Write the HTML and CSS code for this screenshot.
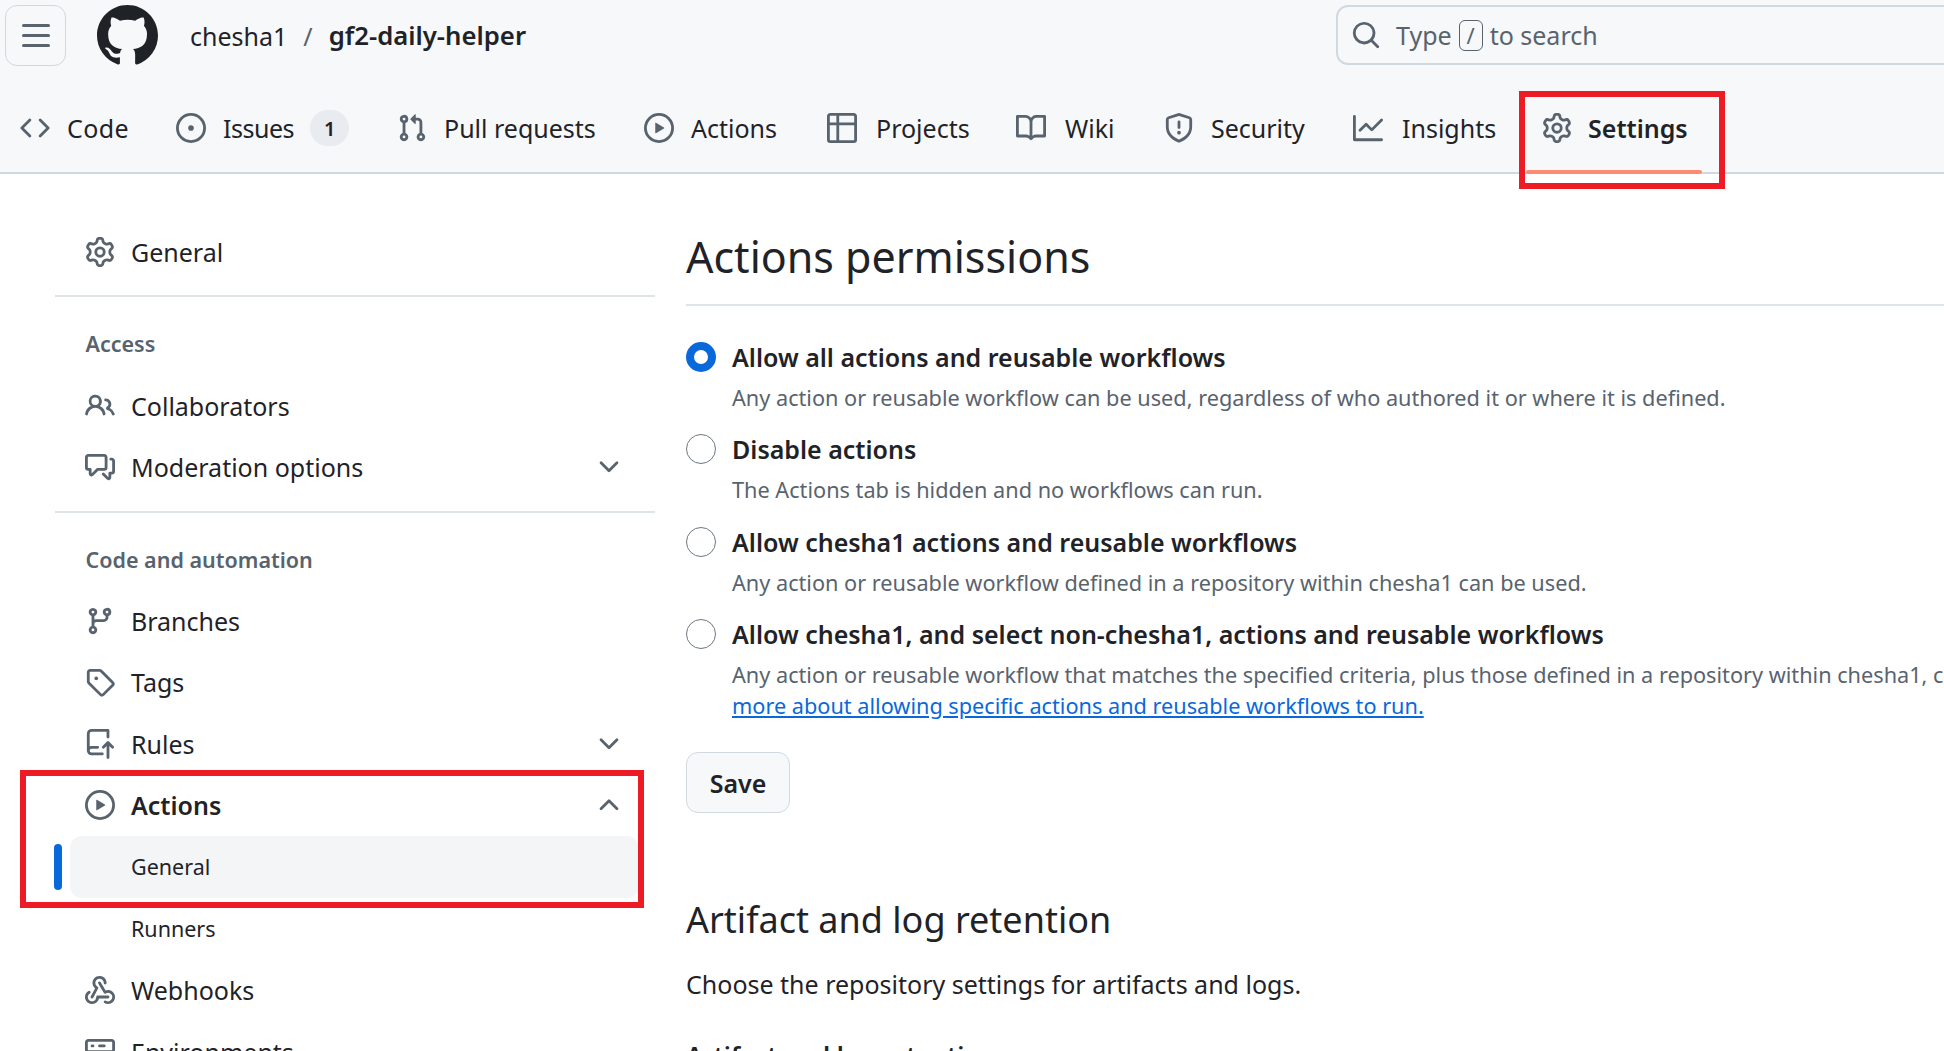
FILE: index.html
```html
<!DOCTYPE html>
<html lang="en">
<head>
<meta charset="utf-8">
<title>Actions permissions</title>
<link rel="stylesheet" href="styles.css">
</head>
<body>
<svg class="sprite" aria-hidden="true">
<symbol id="i-bars" viewBox="0 0 16 16"><path d="M1 2.75A.75.75 0 0 1 1.75 2h12.5a.75.75 0 0 1 0 1.5H1.75A.75.75 0 0 1 1 2.75Zm0 5A.75.75 0 0 1 1.75 7h12.5a.75.75 0 0 1 0 1.5H1.75A.75.75 0 0 1 1 7.75ZM1.75 12h12.5a.75.75 0 0 1 0 1.5H1.75a.75.75 0 0 1 0-1.5Z"/></symbol>
<symbol id="i-github" viewBox="0 0 16 16"><path d="M8 0c4.42 0 8 3.58 8 8a8.013 8.013 0 0 1-5.45 7.59c-.4.08-.55-.17-.55-.38 0-.27.01-1.13.01-2.2 0-.75-.25-1.23-.54-1.48 1.78-.2 3.65-.88 3.65-3.95 0-.88-.31-1.59-.82-2.15.08-.2.36-1.02-.08-2.12 0 0-.67-.22-2.2.82-.64-.18-1.32-.27-2-.27-.68 0-1.36.09-2 .27-1.53-1.03-2.2-.82-2.2-.82-.44 1.1-.16 1.92-.08 2.12-.51.56-.82 1.28-.82 2.15 0 3.06 1.86 3.75 3.64 3.95-.23.2-.44.55-.51 1.07-.46.21-1.61.55-2.33-.66-.15-.24-.6-.83-1.23-.82-.67.01-.27.38.01.53.34.19.73.9.82 1.13.16.45.68 1.31 2.69.94 0 .67.01 1.3.01 1.49 0 .21-.15.45-.55.38A7.995 7.995 0 0 1 0 8c0-4.42 3.58-8 8-8Z"/></symbol>
<symbol id="i-search" viewBox="0 0 16 16"><path d="M10.68 11.74a6 6 0 0 1-7.922-8.982 6 6 0 0 1 8.982 7.922l3.04 3.04a.749.749 0 0 1-.326 1.275.749.749 0 0 1-.734-.215ZM11.5 7a4.499 4.499 0 1 0-8.997 0A4.499 4.499 0 0 0 11.5 7Z"/></symbol>
<symbol id="i-code" viewBox="0 0 16 16"><path d="m11.28 3.22 4.25 4.25a.75.75 0 0 1 0 1.06l-4.25 4.25a.749.749 0 0 1-1.275-.326.749.749 0 0 1 .215-.734L13.94 8l-3.72-3.72a.749.749 0 0 1 .326-1.275.749.749 0 0 1 .734.215Zm-6.56 0a.751.751 0 0 1 1.042.018.751.751 0 0 1 .018 1.042L2.06 8l3.72 3.72a.749.749 0 0 1-.326 1.275.749.749 0 0 1-.734-.215L.47 8.53a.75.75 0 0 1 0-1.06Z"/></symbol>
<symbol id="i-issue" viewBox="0 0 16 16"><path d="M8 9.5a1.5 1.5 0 1 0 0-3 1.5 1.5 0 0 0 0 3Z"/><path d="M8 0a8 8 0 1 1 0 16A8 8 0 0 1 8 0ZM1.5 8a6.5 6.5 0 1 0 13 0 6.5 6.5 0 0 0-13 0Z"/></symbol>
<symbol id="i-pr" viewBox="0 0 16 16"><path d="M1.5 3.25a2.25 2.25 0 1 1 3 2.122v5.256a2.251 2.251 0 1 1-1.5 0V5.372A2.25 2.25 0 0 1 1.5 3.25Zm5.677-.177L9.573.677A.25.25 0 0 1 10 .854V2.5h1A2.5 2.5 0 0 1 13.5 5v5.628a2.251 2.251 0 1 1-1.5 0V5a1 1 0 0 0-1-1h-1v1.646a.25.25 0 0 1-.427.177L7.177 3.427a.25.25 0 0 1 0-.354ZM3.75 2.5a.75.75 0 1 0 0 1.5.75.75 0 0 0 0-1.5Zm0 9.5a.75.75 0 1 0 0 1.5.75.75 0 0 0 0-1.5Zm8.25.75a.75.75 0 1 0 1.5 0 .75.75 0 0 0-1.5 0Z"/></symbol>
<symbol id="i-play" viewBox="0 0 16 16"><path d="M8 0a8 8 0 1 1 0 16A8 8 0 0 1 8 0ZM1.5 8a6.5 6.5 0 1 0 13 0 6.5 6.5 0 0 0-13 0Zm4.879-2.773 4.264 2.559a.25.25 0 0 1 0 .428l-4.264 2.559A.25.25 0 0 1 6 10.559V5.442a.25.25 0 0 1 .379-.215Z"/></symbol>
<symbol id="i-table" viewBox="0 0 16 16"><path d="M0 1.75C0 .784.784 0 1.75 0h12.5C15.216 0 16 .784 16 1.75v12.5A1.75 1.75 0 0 1 14.25 16H1.75A1.75 1.75 0 0 1 0 14.25ZM6.5 6.5v8h7.75a.25.25 0 0 0 .25-.25V6.5Zm8-1.5V1.75a.25.25 0 0 0-.25-.25H6.5V5Zm-13 1.5v7.75c0 .138.112.25.25.25H5v-8ZM5 5V1.5H1.75a.25.25 0 0 0-.25.25V5Z"/></symbol>
<symbol id="i-book" viewBox="0 0 16 16"><path d="M0 1.75A.75.75 0 0 1 .75 1h4.253c1.227 0 2.317.59 3 1.501A3.743 3.743 0 0 1 11.006 1h4.245a.75.75 0 0 1 .75.75v10.5a.75.75 0 0 1-.75.75h-4.507a2.25 2.25 0 0 0-1.591.659l-.622.621a.75.75 0 0 1-1.06 0l-.622-.621A2.25 2.25 0 0 0 5.258 13H.75a.75.75 0 0 1-.75-.75Zm7.251 10.324.004-5.073-.002-2.253A2.25 2.25 0 0 0 5.003 2.5H1.5v9h3.757a3.75 3.75 0 0 1 1.994.574ZM8.755 4.75l-.004 7.322a3.752 3.752 0 0 1 1.992-.572H14.5v-9h-3.495a2.25 2.25 0 0 0-2.25 2.25Z"/></symbol>
<symbol id="i-shield" viewBox="0 0 16 16"><path d="M7.467.133a1.748 1.748 0 0 1 1.066 0l5.25 1.68A1.75 1.75 0 0 1 15 3.48V7c0 1.566-.32 3.182-1.303 4.682-.983 1.498-2.585 2.813-5.032 3.855a1.697 1.697 0 0 1-1.33 0c-2.447-1.042-4.049-2.357-5.032-3.855C1.32 10.182 1 8.566 1 7V3.48a1.75 1.75 0 0 1 1.217-1.667Zm.61 1.429a.25.25 0 0 0-.153 0l-5.25 1.68a.25.25 0 0 0-.174.238V7c0 1.358.275 2.666 1.057 3.86.784 1.194 2.121 2.34 4.366 3.297a.196.196 0 0 0 .154 0c2.245-.956 3.582-2.104 4.366-3.298C13.225 9.666 13.5 8.36 13.5 7V3.48a.251.251 0 0 0-.174-.237l-5.25-1.68ZM8.75 4.75v3a.75.75 0 0 1-1.5 0v-3a.75.75 0 0 1 1.5 0ZM9 10.5a1 1 0 1 1-2 0 1 1 0 0 1 2 0Z"/></symbol>
<symbol id="i-graph" viewBox="0 0 16 16"><path d="M1.5 1.75V13.5h13.75a.75.75 0 0 1 0 1.5H.75a.75.75 0 0 1-.75-.75V1.75a.75.75 0 0 1 1.5 0Zm14.28 2.53-5.25 5.25a.75.75 0 0 1-1.06 0L7 7.06 4.28 9.78a.751.751 0 0 1-1.042-.018.751.751 0 0 1-.018-1.042l3.25-3.25a.75.75 0 0 1 1.06 0L10 7.94l4.72-4.72a.751.751 0 0 1 1.042.018.751.751 0 0 1 .018 1.042Z"/></symbol>
<symbol id="i-gear" viewBox="0 0 16 16"><path d="M8 0a8.2 8.2 0 0 1 .701.031C9.444.095 9.99.645 10.16 1.29l.288 1.107c.018.066.079.158.212.224.231.114.454.243.668.386.123.082.233.09.299.071l1.103-.303c.644-.176 1.392.021 1.82.63.27.385.506.792.704 1.218.315.675.111 1.422-.364 1.891l-.814.806c-.049.048-.098.147-.088.294.016.257.016.515 0 .772-.01.147.038.246.088.294l.814.806c.475.469.679 1.216.364 1.891a7.977 7.977 0 0 1-.704 1.217c-.428.61-1.176.807-1.82.63l-1.102-.302c-.067-.019-.177-.011-.3.071a5.909 5.909 0 0 1-.668.386c-.133.066-.194.158-.211.224l-.29 1.106c-.168.646-.715 1.196-1.458 1.26a8.006 8.006 0 0 1-1.402 0c-.743-.064-1.289-.614-1.458-1.26l-.289-1.106c-.018-.066-.079-.158-.212-.224a5.738 5.738 0 0 1-.668-.386c-.123-.082-.233-.09-.299-.071l-1.103.303c-.644.176-1.392-.021-1.82-.63a8.12 8.12 0 0 1-.704-1.218c-.315-.675-.111-1.422.363-1.891l.815-.806c.05-.048.098-.147.088-.294a6.214 6.214 0 0 1 0-.772c.01-.147-.038-.246-.088-.294l-.815-.806C.635 6.045.431 5.298.746 4.623a7.92 7.92 0 0 1 .704-1.217c.428-.61 1.176-.807 1.82-.63l1.102.302c.067.019.177.011.3-.071.214-.143.437-.272.668-.386.133-.066.194-.158.211-.224l.29-1.106C6.009.645 6.556.095 7.299.03 7.53.01 7.764 0 8 0Zm-.571 1.525c-.036.003-.108.036-.137.146l-.289 1.105c-.147.561-.549.967-.998 1.189-.173.086-.34.183-.5.29-.417.278-.97.423-1.529.27l-1.103-.303c-.109-.03-.175.016-.195.045-.22.312-.412.644-.573.99-.014.031-.021.11.059.19l.815.806c.411.406.562.957.53 1.456a4.709 4.709 0 0 0 0 .582c.032.499-.119 1.05-.53 1.456l-.815.806c-.081.08-.073.159-.059.19.162.346.353.677.573.989.02.03.085.076.195.046l1.102-.303c.56-.153 1.113-.008 1.53.27.161.107.328.204.501.29.447.222.85.629.997 1.189l.289 1.105c.029.109.101.143.137.146a6.6 6.6 0 0 0 1.142 0c.036-.003.108-.036.137-.146l.289-1.105c.147-.561.549-.967.998-1.189.173-.086.34-.183.5-.29.417-.278.97-.423 1.529-.27l1.103.303c.109.029.175-.016.195-.045.22-.313.411-.644.573-.99.014-.031.021-.11-.059-.19l-.815-.806c-.411-.406-.562-.957-.53-1.456a4.709 4.709 0 0 0 0-.582c-.032-.499.119-1.05.53-1.456l.815-.806c.081-.08.073-.159.059-.19a6.464 6.464 0 0 0-.573-.989c-.02-.03-.085-.076-.195-.046l-1.102.303c-.56.153-1.113.008-1.53-.27a4.44 4.44 0 0 0-.501-.29c-.447-.222-.85-.629-.997-1.189l-.289-1.105c-.029-.11-.101-.143-.137-.146a6.6 6.6 0 0 0-1.142 0ZM11 8a3 3 0 1 1-6 0 3 3 0 0 1 6 0ZM9.5 8a1.5 1.5 0 1 0-3.001.001A1.5 1.5 0 0 0 9.5 8Z"/></symbol>
<symbol id="i-people" viewBox="0 0 16 16"><path d="M2 5.5a3.5 3.5 0 1 1 5.898 2.549 5.508 5.508 0 0 1 3.034 4.084.75.75 0 1 1-1.482.235 4 4 0 0 0-7.9 0 .75.75 0 0 1-1.482-.236A5.507 5.507 0 0 1 3.102 8.05 3.493 3.493 0 0 1 2 5.5ZM11 4a3.001 3.001 0 0 1 2.22 5.018 5.01 5.01 0 0 1 2.56 3.012.749.749 0 0 1-.885.954.752.752 0 0 1-.549-.514 3.507 3.507 0 0 0-2.522-2.372.75.75 0 0 1-.574-.73v-.352a.75.75 0 0 1 .416-.672A1.5 1.5 0 0 0 11 5.5.75.75 0 0 1 11 4Zm-5.5-.5a2 2 0 1 0-.001 3.999A2 2 0 0 0 5.5 3.5Z"/></symbol>
<symbol id="i-comments" viewBox="0 0 16 16"><path d="M1.75 1h8.5c.966 0 1.75.784 1.75 1.75v5.5A1.75 1.75 0 0 1 10.25 10H7.061l-2.574 2.573A1.458 1.458 0 0 1 2 11.543V10h-.25A1.75 1.75 0 0 1 0 8.25v-5.5C0 1.784.784 1 1.75 1ZM1.5 2.75v5.5c0 .138.112.25.25.25h1a.75.75 0 0 1 .75.75v2.19l2.72-2.72a.749.749 0 0 1 .53-.22h3.5a.25.25 0 0 0 .25-.25v-5.5a.25.25 0 0 0-.25-.25h-8.5a.25.25 0 0 0-.25.25Zm13 2a.25.25 0 0 0-.25-.25h-.5a.75.75 0 0 1 0-1.5h.5c.966 0 1.75.784 1.75 1.75v5.5A1.75 1.75 0 0 1 14.25 12H14v1.543a1.458 1.458 0 0 1-2.487 1.03L9.22 12.28a.749.749 0 0 1 .326-1.275.749.749 0 0 1 .734.215l2.22 2.22v-2.19a.75.75 0 0 1 .75-.75h1a.25.25 0 0 0 .25-.25Z"/></symbol>
<symbol id="i-branch" viewBox="0 0 16 16"><path d="M9.5 3.25a2.25 2.25 0 1 1 3 2.122V6A2.5 2.5 0 0 1 10 8.5H6a1 1 0 0 0-1 1v1.128a2.251 2.251 0 1 1-1.5 0V5.372a2.25 2.25 0 1 1 1.5 0v1.836A2.493 2.493 0 0 1 6 7h4a1 1 0 0 0 1-1v-.628A2.25 2.25 0 0 1 9.5 3.25Zm-6 0a.75.75 0 1 0 1.5 0 .75.75 0 0 0-1.5 0Zm8.25-.75a.75.75 0 1 0 0 1.5.75.75 0 0 0 0-1.5ZM4.25 12a.75.75 0 1 0 0 1.5.75.75 0 0 0 0-1.5Z"/></symbol>
<symbol id="i-tag" viewBox="0 0 16 16"><path d="M1 7.775V2.75C1 1.784 1.784 1 2.75 1h5.025c.464 0 .91.184 1.238.513l6.25 6.25a1.75 1.75 0 0 1 0 2.474l-5.026 5.026a1.75 1.75 0 0 1-2.474 0l-6.25-6.25A1.752 1.752 0 0 1 1 7.775Zm1.5 0c0 .066.026.13.073.177l6.25 6.25a.25.25 0 0 0 .354 0l5.025-5.025a.25.25 0 0 0 0-.354l-6.25-6.25a.25.25 0 0 0-.177-.073H2.75a.25.25 0 0 0-.25.25ZM6 5a1 1 0 1 1 0 2 1 1 0 0 1 0-2Z"/></symbol>
<symbol id="i-push" viewBox="0 0 16 16"><path d="M1 2.5A2.5 2.5 0 0 1 3.5 0h8.75a.75.75 0 0 1 .75.75v3.5a.75.75 0 0 1-1.5 0V1.5h-8a1 1 0 0 0-1 1v6.708A2.493 2.493 0 0 1 3.5 9h3.25a.75.75 0 0 1 0 1.5H3.5a1 1 0 0 0 0 2h5.75a.75.75 0 0 1 0 1.5H3.5A2.5 2.5 0 0 1 1 11.5Zm13.23 7.79h-.001l-1.224-1.224v6.184a.75.75 0 0 1-1.5 0V9.066L10.28 10.29a.75.75 0 0 1-1.06-1.061l2.505-2.504a.75.75 0 0 1 1.06 0L15.29 9.23a.751.751 0 0 1-.018 1.042.751.751 0 0 1-1.042.018Z"/></symbol>
<symbol id="i-webhook" viewBox="0 0 16 16"><path d="M5.5 4.25a2.25 2.25 0 0 1 4.5 0 .75.75 0 0 0 1.5 0 3.75 3.75 0 1 0-6.14 2.889l-2.272 4.258a.75.75 0 0 0 1.324.706L7 7.25a.75.75 0 0 0-.309-1.015A2.25 2.25 0 0 1 5.5 4.25Z"/><path d="M7.364 3.607a.75.75 0 0 1 1.03.257l2.608 4.349a3.75 3.75 0 1 1-.628 6.785.75.75 0 0 1 .752-1.299 2.25 2.25 0 1 0-.033-3.88.75.75 0 0 1-1.03-.256L7.107 4.636a.75.75 0 0 1 .257-1.03Z"/><path d="M2.9 8.776A.75.75 0 0 1 2.625 9.8 2.25 2.25 0 1 0 6 11.75a.75.75 0 0 1 .75-.751h5.5a.75.75 0 0 1 0 1.5H7.425a3.751 3.751 0 1 1-5.55-3.998.75.75 0 0 1 1.024.274Z"/></symbol>
<symbol id="i-server" viewBox="0 0 16 16"><path d="M1.75 1h12.5c.966 0 1.75.784 1.75 1.75v4c0 .372-.116.717-.314 1 .198.283.314.628.314 1v4a1.75 1.75 0 0 1-1.75 1.75H1.75A1.75 1.75 0 0 1 0 12.75v-4c0-.358.109-.707.314-1a1.739 1.739 0 0 1-.314-1v-4C0 1.784.784 1 1.75 1ZM1.5 2.75v4c0 .138.112.25.25.25h12.5a.25.25 0 0 0 .25-.25v-4a.25.25 0 0 0-.25-.25H1.75a.25.25 0 0 0-.25.25Zm.25 5.75a.25.25 0 0 0-.25.25v4c0 .138.112.25.25.25h12.5a.25.25 0 0 0 .25-.25v-4a.25.25 0 0 0-.25-.25ZM7 4.75A.75.75 0 0 1 7.75 4h2.5a.75.75 0 0 1 0 1.5h-2.5A.75.75 0 0 1 7 4.75ZM7.75 10h2.5a.75.75 0 0 1 0 1.5h-2.5a.75.75 0 0 1 0-1.5ZM3 4.75A.75.75 0 0 1 3.75 4h.5a.75.75 0 0 1 0 1.5h-.5A.75.75 0 0 1 3 4.75ZM3.75 10h.5a.75.75 0 0 1 0 1.5h-.5a.75.75 0 0 1 0-1.5Z"/></symbol>
<symbol id="i-down" viewBox="0 0 16 16"><path d="M12.78 5.22a.749.749 0 0 1 0 1.06l-4.25 4.25a.749.749 0 0 1-1.06 0L3.22 6.28a.749.749 0 1 1 1.06-1.06L8 8.939l3.72-3.719a.749.749 0 0 1 1.06 0Z"/></symbol>
<symbol id="i-up" viewBox="0 0 16 16"><path d="M3.22 10.53a.749.749 0 0 1 0-1.06l4.25-4.25a.749.749 0 0 1 1.06 0l4.25 4.25a.749.749 0 0 1-1.06 1.06L8 6.811 4.28 10.53a.749.749 0 0 1-1.06 0Z"/></symbol>
</svg>

<header class="header">
  <div class="topbar">
    <div class="top-left">
      <button class="menu-btn" type="button"><svg class="icon icon-menu"><use href="#i-bars"/></svg></button>
      <svg class="logo"><use href="#i-github"/></svg>
      <nav class="crumbs"><span class="owner">chesha1</span><span class="slash">/</span><strong class="repo">gf2-daily-helper</strong></nav>
    </div>
    <div class="search">
      <svg class="icon"><use href="#i-search"/></svg>
      <span class="search-text">Type</span><kbd class="slash-key">/</kbd><span class="search-text">to search</span>
    </div>
  </div>
  <nav class="tabs">
    <a class="tab tab-code"><svg class="icon"><use href="#i-code"/></svg><span>Code</span></a>
    <a class="tab tab-issues"><svg class="icon"><use href="#i-issue"/></svg><span>Issues</span><span class="badge">1</span></a>
    <a class="tab tab-pulls"><svg class="icon"><use href="#i-pr"/></svg><span>Pull requests</span></a>
    <a class="tab tab-actions"><svg class="icon"><use href="#i-play"/></svg><span>Actions</span></a>
    <a class="tab tab-projects"><svg class="icon"><use href="#i-table"/></svg><span>Projects</span></a>
    <a class="tab tab-wiki"><svg class="icon"><use href="#i-book"/></svg><span>Wiki</span></a>
    <a class="tab tab-security"><svg class="icon"><use href="#i-shield"/></svg><span>Security</span></a>
    <a class="tab tab-insights"><svg class="icon"><use href="#i-graph"/></svg><span>Insights</span></a>
    <a class="tab tab-active"><svg class="icon"><use href="#i-gear"/></svg><span>Settings</span></a>
  </nav>
</header>

<div class="layout">
  <aside class="sidebar">
    <a class="row"><svg class="icon"><use href="#i-gear"/></svg><span>General</span></a>
    <hr class="rule">
    <h3 class="group-title">Access</h3>
    <a class="row"><svg class="icon"><use href="#i-people"/></svg><span>Collaborators</span></a>
    <a class="row"><svg class="icon"><use href="#i-comments"/></svg><span>Moderation options</span><svg class="icon chev"><use href="#i-down"/></svg></a>
    <hr class="rule rule-second">
    <h3 class="group-title group-title-second">Code and automation</h3>
    <a class="row"><svg class="icon"><use href="#i-branch"/></svg><span>Branches</span></a>
    <a class="row"><svg class="icon"><use href="#i-tag"/></svg><span>Tags</span></a>
    <a class="row"><svg class="icon"><use href="#i-push"/></svg><span>Rules</span><svg class="icon chev"><use href="#i-down"/></svg></a>
    <a class="row row-strong"><svg class="icon"><use href="#i-play"/></svg><span>Actions</span><svg class="icon chev"><use href="#i-up"/></svg></a>
    <a class="row sub sub-active"><span>General</span></a>
    <a class="row sub"><span>Runners</span></a>
    <a class="row"><svg class="icon"><use href="#i-webhook"/></svg><span>Webhooks</span></a>
    <a class="row"><svg class="icon"><use href="#i-server"/></svg><span>Environments</span></a>
  </aside>

  <main class="main">
    <h2 class="title title-rule">Actions permissions</h2>
    <div class="options">
      <div class="option">
        <span class="radio radio-on"></span>
        <div class="option-body">
          <div class="label">Allow all actions and reusable workflows</div>
          <p class="note">Any action or reusable workflow can be used, regardless of who authored it or where it is defined.</p>
        </div>
      </div>
      <div class="option">
        <span class="radio"></span>
        <div class="option-body">
          <div class="label">Disable actions</div>
          <p class="note">The Actions tab is hidden and no workflows can run.</p>
        </div>
      </div>
      <div class="option">
        <span class="radio"></span>
        <div class="option-body">
          <div class="label">Allow chesha1 actions and reusable workflows</div>
          <p class="note">Any action or reusable workflow defined in a repository within chesha1 can be used.</p>
        </div>
      </div>
      <div class="option">
        <span class="radio"></span>
        <div class="option-body">
          <div class="label">Allow chesha1, and select non-chesha1, actions and reusable workflows</div>
          <p class="note">Any action or reusable workflow that matches the specified criteria, plus those defined in a repository within chesha1, can be used. Learn<br><a class="link">more about allowing specific actions and reusable workflows to run.</a></p>
        </div>
      </div>
    </div>
    <button class="save" type="button">Save</button>
    <h2 class="title title-second">Artifact and log retention</h2>
    <p class="lead">Choose the repository settings for artifacts and logs.</p>
    <div class="label label-cut">Artifact and log retention</div>
  </main>

  <div class="mark mark-side"></div>
</div>
<div class="mark mark-tab"></div>
</body>
</html>
```
FILE: styles.css
```css
* { box-sizing: border-box; }
html, body { height: 100%; }
body {
  margin: 0;
  position: relative;
  overflow: hidden;
  background: #fff;
  color: #1f2328;
  font-family: "Noto Sans", "Open Sans", sans-serif;
  font-size: 25px;
}
.sprite { display: none; }
.icon { width: 30px; height: 30px; fill: #59636e; flex: none; display: block; }

.header { background: #f6f8fa; border-bottom: 2px solid #d1d9e0; height: 174px; }
.topbar { display: flex; height: 86px; padding: 5px 0 0 5px; }
.top-left { flex: 0 0 1331px; display: flex; align-items: flex-start; }
.menu-btn {
  width: 61px; height: 61px; padding: 0; border: 1.5px solid #d1d9e0; border-radius: 12px;
  background: #f6f8fa; display: flex; align-items: center; justify-content: center;
}
.icon-menu { width: 32px; height: 32px; }
.logo { width: 61px; height: 61px; margin-left: 31px; fill: #1f2328; flex: none; }
.crumbs { display: flex; align-items: center; height: 61px; margin-left: 32px; font-size: 25px; }
.slash { color: #59636e; margin: 0 16px; }
.repo { font-weight: 600; font-size: 25.7px; }
.search {
  flex: 0 0 660px; height: 60px; display: flex; align-items: center; gap: 15px; padding-left: 13px;
  border: 2px solid #d1d9e0; border-radius: 12px; color: #59636e; font-size: 25px;
}
.slash-key {
  width: 24px; height: 31px; border: 1.5px solid #59636e; border-radius: 6px; display: flex;
  align-items: center; justify-content: center; font: inherit; font-size: 22px; margin: 0 -8px;
}

.tabs { display: flex; gap: 15px; height: 84px; padding-left: 4px; align-items: center; }
.tab { position: relative; flex: none; display: flex; align-items: center; gap: 17px; padding: 0 0 0 16px; height: 60px; font-size: 25px; }
.tab-code { width: 141px; letter-spacing: .4px; }
.tab-issues { width: 206px; letter-spacing: -.5px; }
.tab-pulls { width: 232px; }
.tab-actions { width: 168px; }
.tab-projects { width: 174px; gap: 19px; }
.tab-wiki { width: 133px; gap: 19px; }
.tab-security { width: 174px; }
.tab-insights { width: 174px; gap: 19px; }
.tab-active { width: 176px; gap: 16px; font-weight: 600; }
.badge {
  width: 39px; height: 36px; border-radius: 18px; background: #e8ebef; margin-left: -1px;
  display: flex; align-items: center; justify-content: center; font-size: 20px; font-weight: 600;
}
.tab-active::after {
  content: ""; position: absolute; left: 0; right: 0; bottom: -16px; height: 4px; border-radius: 2px; background: #fd8c73;
}

.layout { display: flex; padding-left: 55px; position: relative; }
.sidebar { flex: 0 0 600px; padding-top: 47px; }
.row {
  position: relative; display: flex; align-items: center; gap: 16px; height: 61.6px;
  margin: 0 16px 0 15px; padding: 0 15px 0 15px; border-radius: 12px; font-size: 25px;
}
.row > .chev { margin-left: auto; }
.row-strong { font-weight: 600; }
.sub { padding-left: 61px; font-size: 21.5px; }
.sub-active { background: #f4f5f7; }
.sub-active::before {
  content: ""; position: absolute; left: -16px; top: 8px; bottom: 8px; width: 8px; border-radius: 4px; background: #0969da;
}
.rule { border: 0; height: 2px; background: #dfe4e8; margin: 12px 0 16px; }
.rule-second { margin: 13px 0 15px; }
.group-title {
  margin: 0; height: 62.5px; padding-left: 30.5px; display: flex; align-items: center;
  font-size: 21.5px; font-weight: 600; color: #59636e;
}
.group-title-second { height: 61.5px; }

.main { flex: none; width: 1258px; margin-left: 31px; }
.title { margin: 0; font-weight: 400; }
.title-rule { height: 132px; padding-top: 48px; line-height: 70px; font-size: 43px; border-bottom: 2px solid #dfe4e8; }
.options { padding-top: 24px; }
.option { display: flex; gap: 16px; height: 92.3px; }
.option-body { flex: 1; min-width: 0; padding-top: 3px; }
.radio { flex: none; width: 30px; height: 30px; margin-top: 12px; border-radius: 50%; border: 1.5px solid #6e7781; background: #fff; }
.radio-on { border: 8px solid #0969da; }
.label { font-size: 25px; font-weight: 600; line-height: 48px; white-space: nowrap; }
.note { margin: 1px 0 0; font-size: 21.7px; line-height: 31px; color: #59636e; white-space: nowrap; }
.link { color: #0969da; text-decoration: underline; }
.save {
  display: block; width: 104px; height: 61px; margin-top: 53px; padding: 0; border: 1.5px solid #d1d9e0; border-radius: 12px;
  background: #f6f8fa; color: #1f2328; font: inherit; font-size: 25px; font-weight: 600;
}
.title-second { font-size: 36px; line-height: 50px; margin-top: 82px; }
.lead { margin: 19px 0 0; font-size: 25px; line-height: 40px; }
.label-cut { margin-top: 27px; }

.mark { position: absolute; border: 6px solid #ed1c24; pointer-events: none; }
.mark-side { left: 20px; top: 596px; width: 624px; height: 138px; }
.mark-tab { left: 1519px; top: 91px; width: 206px; height: 98px; }
```
